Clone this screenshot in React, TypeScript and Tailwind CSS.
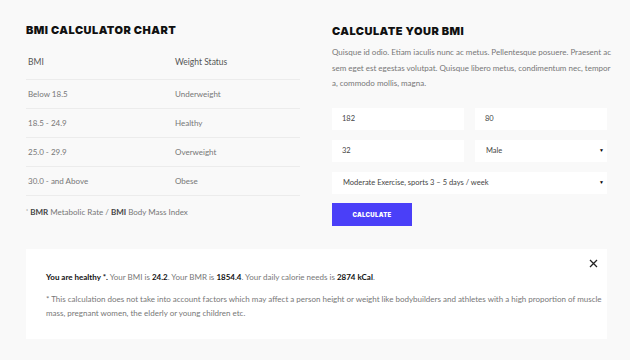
import React from "react";

const rows = [
  ["Below 18.5", "Underweight"],
  ["18.5 - 24.9", "Healthy"],
  ["25.0 - 29.9", "Overweight"],
  ["30.0 - and Above", "Obese"],
];

export default function App() {
  return (
    <div className="w-[630px] h-[360px] bg-[#f9f9f9] overflow-hidden" style={{ fontFamily: "Lato, 'Noto Sans', sans-serif" }}>
      <div className="flex pt-[22px] pl-[26px] gap-[32px]">
        <div className="w-[274px] shrink-0">
          <h2 className="text-[11px] font-black tracking-[0.45px] text-[#111] leading-[16px]" style={{ fontFamily: "Inter, sans-serif" }}>BMI CALCULATOR CHART</h2>
          <div className="mt-[18px] text-[8px] text-[#777]">
            <div className="flex h-[24px] items-start border-b border-[#ececec] text-[#555] text-[8.5px]">
              <div className="w-[149px] pl-[2px]">BMI</div>
              <div>Weight Status</div>
            </div>
            {rows.map((r) => (
              <div key={r[0]} className="flex h-[29px] items-center border-b border-[#ececec]">
                <div className="w-[149px] pl-[2px]">{r[0]}</div>
                <div>{r[1]}</div>
              </div>
            ))}
          </div>
          <div className="mt-[10px] text-[8px] text-[#777]">
            <sup className="text-[5px]">*</sup> <b className="text-[#444]">BMR</b> Metabolic Rate / <b className="text-[#444]">BMI</b> Body Mass Index
          </div>
        </div>
        <div className="w-[275px] shrink-0">
          <h2 className="text-[11px] font-black tracking-[0.45px] text-[#111] leading-[16px] mt-[1px]" style={{ fontFamily: "Inter, sans-serif" }}>CALCULATE YOUR BMI</h2>
          <p className="mt-[6px] text-[8px] leading-[15.5px] text-[#777] whitespace-nowrap">
            Quisque id odio. Etiam iaculis nunc ac metus. Pellentesque posuere. Praesent ac<br />
            sem eget est egestas volutpat. Quisque libero metus, condimentum nec, tempor<br />
            a, commodo mollis, magna.
          </p>
          <div className="mt-[16px] grid grid-cols-2 gap-x-[11px] gap-y-[10px] text-[7.5px] text-[#444]">
            <div className="bg-white h-[22px] flex items-center pl-[10px]">182</div>
            <div className="bg-white h-[22px] flex items-center pl-[10px]">80</div>
            <div className="bg-white h-[22px] flex items-center pl-[10px]">32</div>
            <div className="bg-white h-[22px] flex items-center pl-[11px] pr-[3px] justify-between">
              <span>Male</span>
              <span className="text-[5px] text-black">▼</span>
            </div>
            <div className="col-span-2 bg-white h-[22px] flex items-center pl-[11px] pr-[3px] justify-between">
              <span>Moderate Exercise, sports 3 – 5 days / week</span>
              <span className="text-[5px] text-black">▼</span>
            </div>
          </div>
          <button className="mt-[9px] w-[80px] h-[23px] bg-[#4a3ff8] text-white text-[6px] font-black tracking-[0.3px] block" style={{ fontFamily: "Inter, sans-serif" }}>CALCULATE</button>
        </div>
      </div>
      <div className="ml-[26px] mt-[23px] w-[581px] h-[90px] bg-white relative pl-[20px] pt-[22px] text-[8px] text-[#777]">
        <button className="absolute right-[9px] top-[10px] text-[#222]">
          <svg width="9" height="9" viewBox="0 0 9 9"><path d="M1 1L8 8M8 1L1 8" stroke="#222" strokeWidth="1.3" /></svg>
        </button>
        <div>
          <b className="text-[#111]">You are healthy *.</b> Your BMI is <b className="text-[#111]">24.2</b>. Your BMR is <b className="text-[#111]">1854.4</b>. Your daily calorie needs is <b className="text-[#111]">2874 kCal</b>.
        </div>
        <div className="mt-[9px] leading-[14px] whitespace-nowrap">
          * This calculation does not take into account factors which may affect a person height or weight like bodybuilders and athletes with a high proportion of muscle<br />
          mass, pregnant women, the elderly or young children etc.
        </div>
      </div>
    </div>
  );
}
